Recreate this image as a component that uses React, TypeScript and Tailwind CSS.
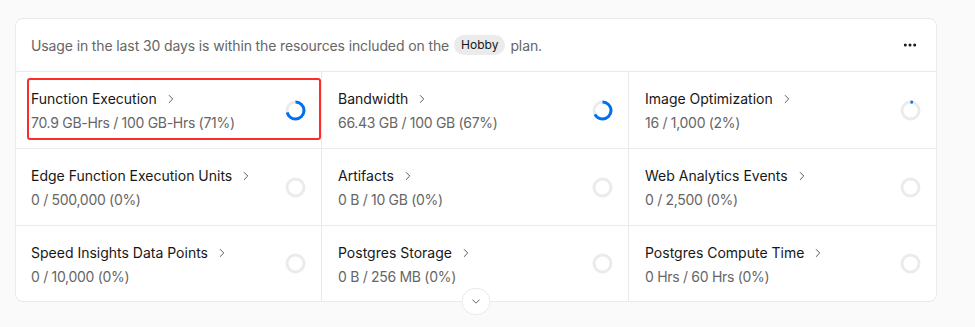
import React from 'react'
import { ChevronRight, ChevronDown, Ellipsis } from 'lucide-react'

interface Metric {
  title: string
  value: string
  pct: number
}

const metrics: Metric[] = [
  { title: 'Function Execution', value: '70.9 GB-Hrs / 100 GB-Hrs (71%)', pct: 71 },
  { title: 'Bandwidth', value: '66.43 GB / 100 GB (67%)', pct: 67 },
  { title: 'Image Optimization', value: '16 / 1,000 (2%)', pct: 2 },
  { title: 'Edge Function Execution Units', value: '0 / 500,000 (0%)', pct: 0 },
  { title: 'Artifacts', value: '0 B / 10 GB (0%)', pct: 0 },
  { title: 'Web Analytics Events', value: '0 / 2,500 (0%)', pct: 0 },
  { title: 'Speed Insights Data Points', value: '0 / 10,000 (0%)', pct: 0 },
  { title: 'Postgres Storage', value: '0 B / 256 MB (0%)', pct: 0 },
  { title: 'Postgres Compute Time', value: '0 Hrs / 60 Hrs (0%)', pct: 0 },
]

const Ring = ({ pct }: { pct: number }) => {
  const r = 8.5
  const c = 2 * Math.PI * r
  const len = Math.max((pct / 100) * c, 2.5)
  return (
    <svg width="21" height="21" viewBox="0 0 21 21" className="shrink-0 -rotate-90">
      <circle cx="10.5" cy="10.5" r={r} fill="none" stroke="#ebebeb" strokeWidth="3" />
      {pct > 0 && (
        <circle
          cx="10.5"
          cy="10.5"
          r={r}
          fill="none"
          stroke="#0070f3"
          strokeWidth="3"
          strokeDasharray={`${len} ${c}`}
        />
      )}
    </svg>
  )
}

export default function App() {
  return (
    <div
      className="min-h-[327px] w-[975px] bg-[#fafafa] pl-[15px] pt-[18px]"
      style={{ fontFamily: 'Inter, "Noto Sans", sans-serif' }}
    >
      <div className="relative w-[922px] rounded-lg border border-[#eaeaea] bg-white">
        {/* header */}
        <div className="flex h-[53px] items-center justify-between border-b border-[#eaeaea] pl-[15px] pr-[18px]">
          <p className="flex items-center text-[14px] tracking-[-0.12px] text-[#666666]">
            Usage in the last 30 days is within the resources included on the
            <span className="mx-[5px] rounded-full bg-[#ebebeb] px-[7px] py-[2px] text-[12px] leading-[16px] tracking-normal text-[#171717]">
              Hobby
            </span>
            plan.
          </p>
          <Ellipsis size={16} strokeWidth={2.5} className="text-[#171717]" />
        </div>

        <div className="grid grid-cols-[306px_307px_1fr]">
          {metrics.map((m, i) => (
            <div
              key={m.title}
              className={`flex items-center justify-between pr-[15px] ${i % 3 === 0 ? 'pl-[15px]' : 'pl-4'} ${i < 6 ? 'h-[77px] border-b' : 'h-[75px]'} ${i % 3 !== 2 ? 'border-r' : ''} border-[#eaeaea]`}
            >
              <div className="flex flex-col gap-1 pt-[2px]">
                <div className="flex items-center gap-[7px] text-[14px] leading-5 text-[#171717]">
                  {m.title}
                  <ChevronRight size={14} strokeWidth={1.5} className="text-[#444]" />
                </div>
                <div className="text-[14px] leading-5 tracking-[-0.3px] text-[#666666]">{m.value}</div>
              </div>
              <Ring pct={m.pct} />
            </div>
          ))}
        </div>

        {/* highlight annotation */}
        <div className="pointer-events-none absolute left-[11px] top-[59px] h-[62px] w-[294px] rounded-[3px] border-2 border-[#ff2a2a]" />

        {/* expand */}
        <button className="absolute -bottom-[14px] left-1/2 flex h-[27px] w-[29px] -translate-x-1/2 items-center justify-center rounded-full border border-[#eaeaea] bg-white">
          <ChevronDown size={13} strokeWidth={1.5} className="text-[#444]" />
        </button>
      </div>
    </div>
  )
}
